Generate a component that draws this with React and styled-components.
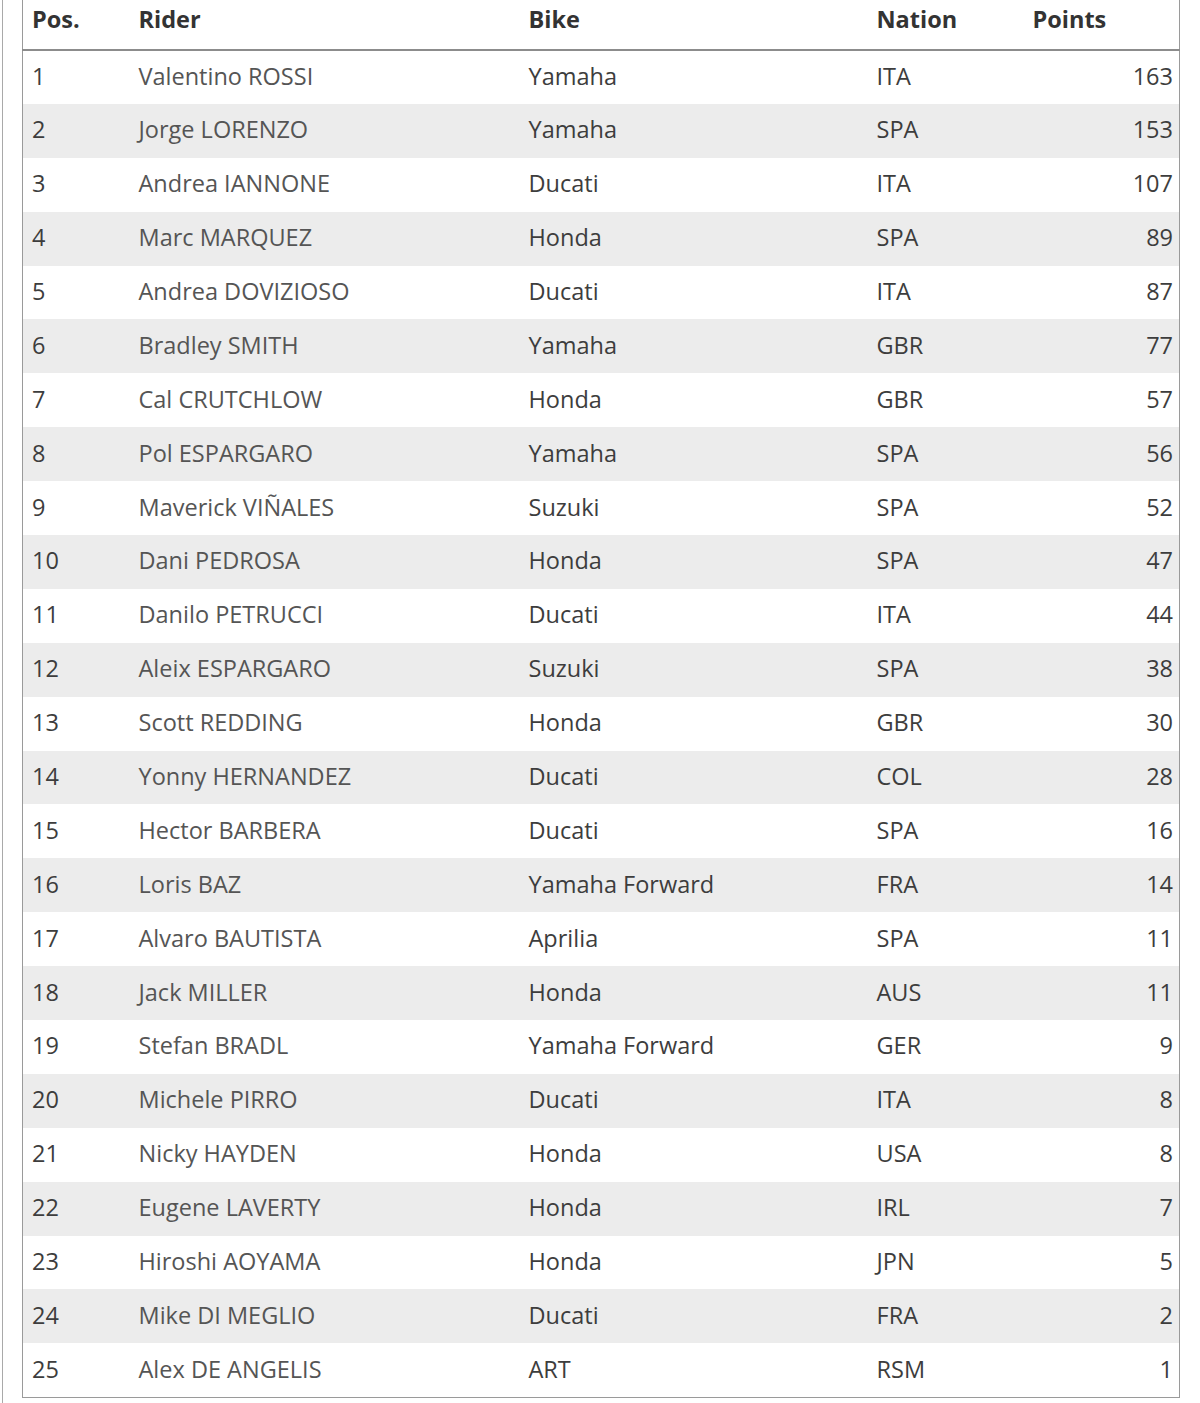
import React from "react";
import styled, { createGlobalStyle } from "styled-components";

const GlobalStyle = createGlobalStyle`
  html, body {
    margin: 0;
    padding: 0;
    background: #ffffff;
  }
  body {
    font-family: "Open Sans", "Noto Sans", "Liberation Sans", sans-serif;
  }
`;

const riders = [
  [1, "Valentino ROSSI", "Yamaha", "ITA", 163],
  [2, "Jorge LORENZO", "Yamaha", "SPA", 153],
  [3, "Andrea IANNONE", "Ducati", "ITA", 107],
  [4, "Marc MARQUEZ", "Honda", "SPA", 89],
  [5, "Andrea DOVIZIOSO", "Ducati", "ITA", 87],
  [6, "Bradley SMITH", "Yamaha", "GBR", 77],
  [7, "Cal CRUTCHLOW", "Honda", "GBR", 57],
  [8, "Pol ESPARGARO", "Yamaha", "SPA", 56],
  [9, "Maverick VIÑALES", "Suzuki", "SPA", 52],
  [10, "Dani PEDROSA", "Honda", "SPA", 47],
  [11, "Danilo PETRUCCI", "Ducati", "ITA", 44],
  [12, "Aleix ESPARGARO", "Suzuki", "SPA", 38],
  [13, "Scott REDDING", "Honda", "GBR", 30],
  [14, "Yonny HERNANDEZ", "Ducati", "COL", 28],
  [15, "Hector BARBERA", "Ducati", "SPA", 16],
  [16, "Loris BAZ", "Yamaha Forward", "FRA", 14],
  [17, "Alvaro BAUTISTA", "Aprilia", "SPA", 11],
  [18, "Jack MILLER", "Honda", "AUS", 11],
  [19, "Stefan BRADL", "Yamaha Forward", "GER", 9],
  [20, "Michele PIRRO", "Ducati", "ITA", 8],
  [21, "Nicky HAYDEN", "Honda", "USA", 8],
  [22, "Eugene LAVERTY", "Honda", "IRL", 7],
  [23, "Hiroshi AOYAMA", "Honda", "JPN", 5],
  [24, "Mike DI MEGLIO", "Ducati", "FRA", 2],
  [25, "Alex DE ANGELIS", "ART", "RSM", 1],
];

const Page = styled.div`
  margin-left: 2px;
  border-left: 1px solid #a9a9a9;
  padding-left: 19px;
  height: 1403px;
  box-sizing: border-box;
  width: 1178px;
`;

const Table = styled.table`
  width: 1157px;
  border-collapse: collapse;
  table-layout: fixed;
  border-left: 1px solid #9a9a9a;
  border-right: 1px solid #9a9a9a;
  border-bottom: 1px solid #9a9a9a;
`;

const HeadCell = styled.th`
  height: 50px;
  padding: 0 0 12px ${(p) => (p.$first ? "9px" : "10px")};
  text-align: left;
  font-size: 23.5px;
  font-weight: 700;
  color: #333333;
  border-bottom: 2px solid #8c8c8c;
  box-sizing: border-box;
`;

const Row = styled.tr`
  height: 53.9px;
  background: ${(p) => (p.$even ? "#ececec" : "#ffffff")};
`;

const Cell = styled.td`
  padding: 0 ${(p) => (p.$right ? "6px" : "0")} 3px
    ${(p) => (p.$right ? "0" : p.$first ? "9px" : "10px")};
  text-align: ${(p) => (p.$right ? "right" : "left")};
  font-size: 23.5px;
  color: ${(p) => (p.$muted ? "#555555" : "#3d3d3d")};
  white-space: nowrap;
`;

export default function App() {
  return (
    <>
      <GlobalStyle />
      <Page>
        <Table>
          <colgroup>
            <col style={{ width: 106 }} />
            <col style={{ width: 390 }} />
            <col style={{ width: 348 }} />
            <col style={{ width: 156 }} />
            <col style={{ width: 157 }} />
          </colgroup>
          <thead>
            <tr>
              <HeadCell $first>Pos.</HeadCell>
              <HeadCell>Rider</HeadCell>
              <HeadCell>Bike</HeadCell>
              <HeadCell>Nation</HeadCell>
              <HeadCell>Points</HeadCell>
            </tr>
          </thead>
          <tbody>
            {riders.map(([pos, name, bike, nation, pts], i) => (
              <Row key={pos} $even={i % 2 === 1}>
                <Cell $first>{pos}</Cell>
                <Cell $muted>{name}</Cell>
                <Cell>{bike}</Cell>
                <Cell>{nation}</Cell>
                <Cell $right>{pts}</Cell>
              </Row>
            ))}
          </tbody>
        </Table>
      </Page>
    </>
  );
}
